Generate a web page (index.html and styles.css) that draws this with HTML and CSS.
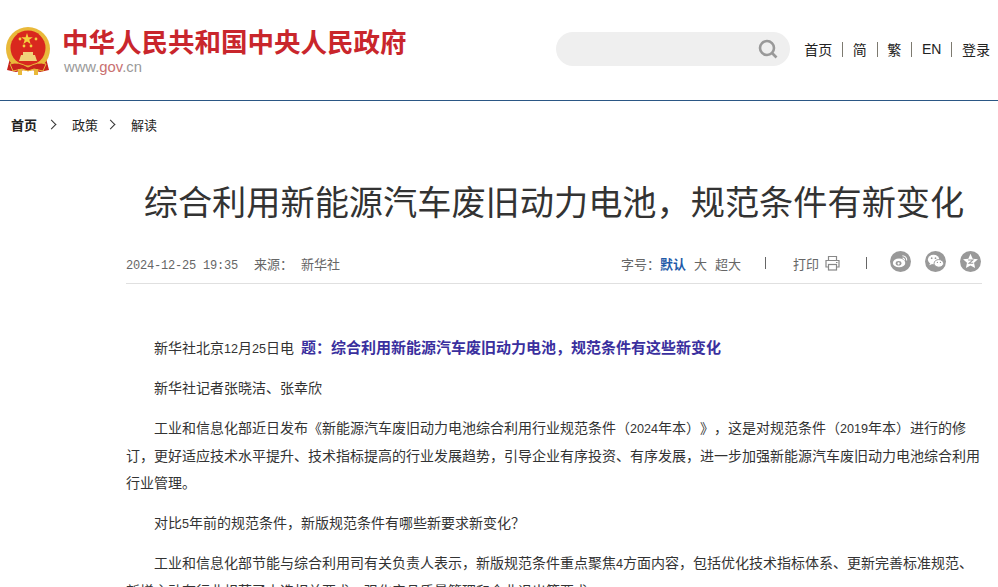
FILE: index.html
```html
<!DOCTYPE html>
<html lang="zh-CN">
<head>
  <meta charset="UTF-8" />
  <meta name="viewport" content="width=device-width, initial-scale=1.0" />
  <title>综合利用新能源汽车废旧动力电池，规范条件有新变化</title>
  <link rel="stylesheet" href="styles.css">
</head>
<body>
  <header class="header">
    <div class="logo">
      <svg class="emblem" viewBox="0 0 44 48" width="44" height="48">
        <path d="M4 31 L1 43 L10 45 L22 42 L34 45 L43 43 L40 31 Z" fill="#c8231c"/>
        <circle cx="22" cy="22" r="22" fill="#e9b93a"/>
        <circle cx="22" cy="21" r="17.5" fill="#d9281e"/>
        <polygon points="21,6 22.4,10.2 26.8,10.2 23.3,12.8 24.6,17 21,14.4 17.4,17 18.7,12.8 15.2,10.2 19.6,10.2" fill="#f4d03f"/>
        <circle cx="14" cy="12" r="1.4" fill="#f4d03f"/>
        <circle cx="18" cy="19" r="1.4" fill="#f4d03f"/>
        <circle cx="25" cy="19" r="1.4" fill="#f4d03f"/>
        <circle cx="30" cy="12" r="1.4" fill="#f4d03f"/>
        <path d="M15 28 L29 28 L31 34 L13 34 Z" fill="#f0d27a"/>
        <rect x="17" y="25" width="10" height="3" fill="#f0d27a"/>
        <path d="M4 37 Q12 34 22 40 Q32 34 40 37 L37 44 L28 42 L22 44 L16 42 L7 44 Z" fill="#c8231c" stroke="#e9b93a"/>
        <rect x="12" y="42" width="4" height="6" fill="#e9b93a"/>
        <rect x="28" y="42" width="4" height="6" fill="#e9b93a"/>
      </svg>
      <div class="logo-text">
        <div class="site-name">中华人民共和国中央人民政府</div>
        <div class="site-url">www.<span class="red">gov</span>.cn</div>
      </div>
    </div>
    <div class="header-right">
      <div class="search">
        <svg viewBox="0 0 20 20" width="20" height="20">
          <circle cx="9" cy="9" r="7" fill="none" stroke="#999" stroke-width="2.6"/>
          <line x1="14" y1="14" x2="18.5" y2="18.5" stroke="#999" stroke-width="2.6"/>
        </svg>
      </div>
      <nav class="top-links">
        <a>首页</a><i></i><a>简</a><i></i><a>繁</a><i></i><a>EN</a><i></i><a>登录</a>
      </nav>
    </div>
  </header>

  <div class="crumbs">
    <a class="home">首页</a>
    <span class="arrow"></span>
    <a>政策</a>
    <span class="arrow"></span>
    <a>解读</a>
  </div>

  <main class="article">
    <h1>综合利用新能源汽车废旧动力电池，规范条件有新变化</h1>

    <div class="meta">
      <div class="meta-left">
        <span class="date">2024-12-25 19:35</span>
        <span>来源：</span>
        <span>新华社</span>
      </div>
      <div class="meta-right">
        <span>字号：<b class="on">默认</b></span>
        <span class="size">大</span>
        <span class="size">超大</span>
        <span class="sep"></span>
        <span class="print">打印
          <svg viewBox="0 0 16 16" width="17" height="16">
            <path d="M4 5V1.5h8V5M4 12H1.5V5.5h13V12H12" fill="none" stroke="#888" stroke-width="1.2"/>
            <rect x="4" y="9.5" width="8" height="5.5" fill="none" stroke="#888" stroke-width="1.2"/>
            <line x1="11.5" y1="7.5" x2="13" y2="7.5" stroke="#888"/>
          </svg>
        </span>
        <span class="sep sep-last"></span>
        <div class="shares">
          <span class="share">
            <svg viewBox="0 0 22 22" width="22" height="22">
              <ellipse cx="9.5" cy="13" rx="6.5" ry="4.6" fill="#fff"/>
              <ellipse cx="9" cy="13.4" rx="3" ry="2.4" fill="#999"/>
              <circle cx="9" cy="13.6" r="1.2" fill="#fff"/>
              <path d="M13 5.5a4.5 4.5 0 0 1 4.5 5M13.2 8a2 2 0 0 1 2 2.4" fill="none" stroke="#fff" stroke-width="1.1"/>
            </svg>
          </span>
          <span class="share">
            <svg viewBox="0 0 22 22" width="22" height="22">
              <ellipse cx="9" cy="9.5" rx="6" ry="5" fill="#fff"/>
              <path d="M5.5 13l-1 2.5 3-1.4z" fill="#fff"/>
              <ellipse cx="14.5" cy="13.5" rx="5" ry="4" fill="#fff" stroke="#999"/>
              <circle cx="7" cy="8" r=".9" fill="#999"/>
              <circle cx="11" cy="8" r=".9" fill="#999"/>
              <circle cx="13" cy="12.5" r=".7" fill="#999"/>
              <circle cx="16.2" cy="12.5" r=".7" fill="#999"/>
            </svg>
          </span>
          <span class="share">
            <svg viewBox="0 0 22 22" width="22" height="22">
              <polygon points="11,3.5 13.3,8.6 18.8,9.2 14.7,12.9 15.8,18.4 11,15.6 6.2,18.4 7.3,12.9 3.2,9.2 8.7,8.6" fill="#fff"/>
              <path d="M8.5 10h5l-4 3.4h4.4" fill="none" stroke="#999" stroke-width="1.1"/>
            </svg>
          </span>
        </div>
      </div>
    </div>

    <div class="content">
      <p>新华社北京<span class="num">12</span>月<span class="num">25</span>日电 <b class="lead">题：综合利用新能源汽车废旧动力电池，规范条件有这些新变化</b></p>
      <p>新华社记者张晓洁、张幸欣</p>
      <p>工业和信息化部近日发布《新能源汽车废旧动力电池综合利用行业规范条件（<span class="num">2024</span>年本）》，这是对规范条件（<span class="num">2019</span>年本）进行的修订，更好适应技术水平提升、技术指标提高的行业发展趋势，引导企业有序投资、有序发展，进一步加强新能源汽车废旧动力电池综合利用行业管理。</p>
      <p>对比<span class="num">5</span>年前的规范条件，新版规范条件有哪些新要求新变化？</p>
      <p>工业和信息化部节能与综合利用司有关负责人表示，新版规范条件重点聚焦<span class="num">4</span>方面内容，包括优化技术指标体系、更新完善标准规范、新增主动有行业规范了士选相关要求，强化产品质量管理和企业退出等要求。</p>
    </div>
  </main>
</body>
</html>
```

FILE: styles.css
```css
html, body {
  height: 587px;
  overflow: hidden;
}

body {
  margin: 0;
  background: #fff;
  color: #333;
  font-family: "Liberation Sans", "Noto Sans CJK SC", sans-serif;
  font-size: 14px;
  text-spacing-trim: space-all;
}

.header {
  display: flex;
  justify-content: space-between;
  height: 101px;
  box-sizing: border-box;
  padding: 27px 8px 0 6px;
  border-bottom: 1px solid #2b5785;
}

.logo {
  display: flex;
  gap: 12px;
  align-items: flex-start;
}

.site-name {
  color: #c9262c;
  font-size: 26.5px;
  font-weight: bold;
  line-height: 32px;
  white-space: nowrap;
}

.site-url {
  margin-left: 2px;
  color: #999;
  font-size: 14.8px;
  line-height: 17px;
}

.red {
  color: #c9706f;
}

.header-right {
  display: flex;
  align-items: flex-start;
  padding-top: 5px;
}

.search {
  display: flex;
  align-items: center;
  justify-content: flex-end;
  width: 234px;
  height: 34px;
  box-sizing: border-box;
  padding-right: 12px;
  background: #efefef;
  border-radius: 17px;
}

.top-links {
  display: flex;
  align-items: center;
  height: 34px;
  margin-left: 14px;
  color: #222;
  font-size: 14px;
}

.top-links i {
  width: 1px;
  height: 15px;
  margin: 0 9.8px;
  background: #7d7a70;
}

.crumbs {
  display: flex;
  align-items: center;
  height: 47px;
  padding-left: 11px;
  font-size: 13px;
  color: #222;
}

.home {
  margin-right: 2px;
  font-weight: bold;
}

.arrow {
  width: 6px;
  height: 6px;
  margin: 0 17px 0 9px;
  border-top: 1px solid #333;
  border-right: 1px solid #333;
  transform: rotate(45deg);
}

.article {
  width: 856px;
  margin-left: 126px;
}

h1 {
  margin: 31px 0 0;
  color: #333;
  font-size: 34.2px;
  font-weight: normal;
  line-height: 48px;
  text-align: center;
  white-space: nowrap;
}

.meta {
  display: flex;
  justify-content: space-between;
  align-items: center;
  height: 40px;
  margin-top: 16px;
  border-bottom: 1px solid #e0e0e0;
  color: #666;
  font-size: 13px;
}

.meta-left {
  display: flex;
  align-items: baseline;
}

.meta-right {
  display: flex;
  align-items: center;
}

.meta-left span + span {
  margin-left: 8px;
}

.date {
  margin-right: 8px;
  font-family: "Liberation Mono", monospace;
  font-size: 12px;
  letter-spacing: -0.2px;
}

.on {
  color: #1f5ba8;
}

.size {
  margin-left: 8px;
}

.sep {
  width: 1px;
  height: 12px;
  margin: 0 27px 0 24px;
  background: #666;
}

.sep-last {
  margin: 0 23px 0 25px;
}

.print {
  display: flex;
  align-items: center;
  gap: 5px;
}

.shares {
  display: flex;
  gap: 14px;
  margin: 0 1px 4px 0;
}

.share {
  display: flex;
  width: 21px;
  height: 21px;
  align-items: center;
  justify-content: center;
  overflow: hidden;
  border-radius: 50%;
  background: #999;
}

.content {
  padding-top: 50px;
}

.content p {
  margin: 0 0 12.5px;
  color: #333;
  font-size: 14px;
  line-height: 27.5px;
  text-indent: 2em;
}

.num {
  font-size: 12.6px;
  line-height: 1;
}

.lead {
  margin-left: 3px;
  color: #3a2f9e;
  font-size: 15px;
}
```
